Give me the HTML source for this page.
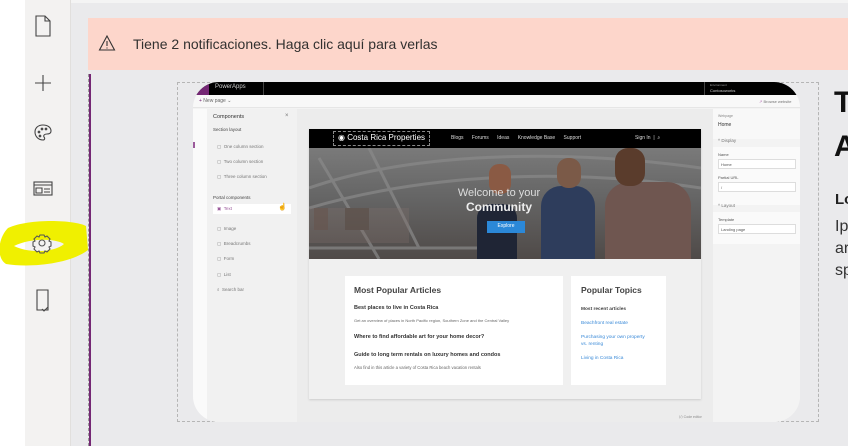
<!DOCTYPE html><html><head><meta charset="utf-8"><style>
*{margin:0;padding:0;box-sizing:border-box}
body{width:848px;height:446px;overflow:hidden;background:#fff;font-family:"Liberation Sans",sans-serif;position:relative}
.a{position:absolute}
.t{position:absolute;white-space:nowrap}
</style></head><body>
<div class="a" style="left:25px;top:0;width:46px;height:446px;background:#f3f2f1;border-right:1px solid #e1dfdd"></div>
<div class="a" style="left:71px;top:0;width:777px;height:446px;background:#eaeaec"></div>
<div class="a" style="left:71px;top:0;width:777px;height:3px;background:#f4f4f4"></div>
<svg class="a" style="left:30px;top:12px" width="26" height="230" viewBox="0 0 26 230" fill="none" stroke="#444" stroke-width="1.1">
<path d="M6 4h9l5 5v15H6z M15 4v5h5"/>
<path d="M13 63v16 M5 71h16"/>
<path d="M13 113c-5 0-8 3-8 7s3 8 8 8c2 0 2-2 1-3-1-2 1-3 3-3 3 0 4-1 4-3 0-4-4-6-8-6z"/>
<circle cx="9" cy="120" r=".8"/><circle cx="12" cy="117" r=".8"/><circle cx="16" cy="117" r=".8"/><circle cx="10" cy="124" r=".8"/>
<rect x="4" y="170" width="18" height="13"/><path d="M4 173h18 M6 176h6v5H6z M14 177h6 M14 180h6"/>
</svg>
<svg class="a" style="left:0;top:218px" width="90" height="58" viewBox="0 0 90 58"><path d="M8 10 C30 0 75 2 86 8 L88 32 C70 46 30 50 6 46 C-4 40 -2 20 8 10z M14 28 C30 20 55 20 64 26 C55 34 30 36 14 28z" fill="#f0f000" fill-rule="evenodd"/>
<g transform="translate(42,25)" fill="none" stroke="#555" stroke-width="1.1"><circle r="3"/><path d="M-2-8h4l1 2 2-1 3 3-1 2 2 1v4l-2 1 1 2-3 3-2-1-1 2h-4l-1-2-2 1-3-3 1-2-2-1v-4l2-1-1-2 3-3 2 1z"/></g></svg>
<svg class="a" style="left:33px;top:288px" width="20" height="26" viewBox="0 0 20 26" fill="none" stroke="#444" stroke-width="1.1"><path d="M4 2h11v20H4z M9 21l2 2 4-4"/></svg>
<div class="a" style="left:88px;top:18px;width:760px;height:52px;background:#fdd6cb"></div>
<svg class="a" style="left:98px;top:34px" width="18" height="18" viewBox="0 0 18 18" fill="none" stroke="#333" stroke-width="1.1"><path d="M9 2L1.5 16h15z M9 7v5 M9 13.5v1"/></svg>
<div class="t" style="left:133px;top:36px;font-size:14px;color:#323130">Tiene 2 notificaciones. Haga clic aquí para verlas</div>
<div class="a" style="left:88px;top:74px;width:1px;height:372px;border-left:1px dashed #999"></div>
<div class="a" style="left:89px;top:74px;width:2px;height:372px;background:#742774"></div>
<div class="a" style="left:177px;top:82px;width:642px;height:340px;border:1px dashed #b5b5b5"></div>
<div class="a" style="left:818px;top:82px;width:30px;height:340px;border-left:1px dashed #b5b5b5"></div>
<div class="a" style="left:193px;top:82px;width:607px;height:340px;border-radius:26px;overflow:hidden;background:#f3f3f3">
 <div class="a" style="left:0;top:0;width:607px;height:13px;background:#000"></div>
 <div class="a" style="left:0;top:0;width:16px;height:13px;background:#742774"></div>
 <div class="t" style="left:22px;top:2px;font-size:6px;color:#ccc">PowerApps</div>
 <div class="a" style="left:70px;top:0;width:1px;height:13px;background:#444"></div>
 <div class="a" style="left:511px;top:0;width:1px;height:13px;background:#444"></div>
 <div class="t" style="left:517px;top:1px;font-size:3px;color:#999">Environment</div>
 <div class="t" style="left:517px;top:6px;font-size:4px;color:#ccc">Contosoworks</div>
 <div class="a" style="left:0;top:13px;width:607px;height:13px;background:#f8f8f8;border-bottom:1px solid #e6e6e6"></div>
 <div class="t" style="left:6px;top:16px;font-size:5px;color:#666"><span style="color:#742774">+</span> New page ⌄</div>
 <div class="t" style="left:566px;top:17px;font-size:4px;color:#777"><span style="color:#b36bb3">↗</span> Browse website</div>
 <div class="a" style="left:0;top:27px;width:14px;height:313px;background:#fafafa"></div>
 <div class="a" style="left:0;top:60px;width:2px;height:6px;background:#9b5a9b"></div>
 <div class="a" style="left:14px;top:27px;width:90px;height:313px;background:#f1f1f1"></div>
 <div class="t" style="left:20px;top:32px;font-size:5.5px;color:#333">Components</div>
 <div class="t" style="left:92px;top:31px;font-size:6px;color:#777">×</div>
 <div class="t" style="left:20px;top:45px;font-size:4.5px;color:#444">Section layout</div>
 <div class="t" style="left:24px;top:57px;font-size:4.5px;color:#777;line-height:15px">▢ &nbsp;One column section<br>▢ &nbsp;Two column section<br>▢ &nbsp;Three column section</div>
 <div class="t" style="left:20px;top:113px;font-size:4.5px;color:#444">Portal components</div>
 <div class="a" style="left:20px;top:122px;width:78px;height:10px;background:#fff"></div>
 <div class="t" style="left:24px;top:124px;font-size:4.5px;color:#9b5a9b">▣ &nbsp;Text</div>
 <div class="t" style="left:85px;top:121px;font-size:7px;color:#333">☝</div>
 <div class="t" style="left:24px;top:139px;font-size:4.5px;color:#777;line-height:15.2px">▢ &nbsp;Image<br>▢ &nbsp;Breadcrumbs<br>▢ &nbsp;Form<br>▢ &nbsp;List<br>⌕ &nbsp;Search bar</div>
 <div class="a" style="left:104px;top:27px;width:416px;height:313px;background:#ececec"></div>
 <div class="a" style="left:116px;top:47px;width:392px;height:270px;background:#f0f0f0;box-shadow:0 1px 2px #ccc"></div>
 <div class="a" style="left:116px;top:47px;width:392px;height:19px;background:#000"></div>
 <div class="a" style="left:140px;top:49px;width:97px;height:15px;border:1px dashed #888"></div>
 <div class="t" style="left:145px;top:51px;font-size:8px;color:#fff">◉ Costa Rica Properties</div>
 <div class="t" style="left:258px;top:53px;font-size:5px;color:#ddd">Blogs &nbsp;&nbsp;&nbsp;&nbsp;&nbsp;Forums &nbsp;&nbsp;&nbsp;&nbsp;&nbsp;Ideas &nbsp;&nbsp;&nbsp;&nbsp;&nbsp;Knowledge Base &nbsp;&nbsp;&nbsp;&nbsp;&nbsp;Support</div>
 <div class="t" style="left:442px;top:53px;font-size:5px;color:#ddd">Sign In &nbsp;| &nbsp;⌕</div>
 <div class="a" style="left:116px;top:66px;width:392px;height:111px;background:linear-gradient(180deg,#7a7a7a 0%,#656565 45%,#4f4a48 100%)"></div>
 <svg class="a" style="left:116px;top:66px" width="392" height="111" viewBox="0 0 392 111" fill="none" stroke="#8a8a8a" stroke-width="3" opacity=".7">
  <path d="M0 40 C100 5 250 0 392 20"/><path d="M0 60 C120 25 260 20 392 40"/><path d="M10 10 L70 111"/><path d="M60 0 L110 100"/><path d="M0 100 H200"/>
  <rect x="5" y="60" width="14" height="22" fill="#5c4a42" stroke="none"/><rect x="36" y="60" width="24" height="22" fill="#4a4038" stroke="none"/><rect x="0" y="60" width="100" height="35" fill="#8a7670" stroke="none" opacity=".35"/>
 </svg>
 <div class="a" style="left:284px;top:122px;width:40px;height:55px;border-radius:14px 14px 0 0;background:#1f2535"></div>
 <div class="a" style="left:348px;top:104px;width:54px;height:73px;border-radius:20px 20px 0 0;background:#2e3d5c"></div>
 <div class="a" style="left:364px;top:76px;width:24px;height:30px;border-radius:11px;background:#7b5a48"></div>
 <div class="a" style="left:412px;top:100px;width:86px;height:77px;border-radius:24px 24px 0 0;background:#6f5650"></div>
 <div class="a" style="left:422px;top:66px;width:30px;height:38px;border-radius:13px;background:#5a3c2c"></div>
 <div class="a" style="left:296px;top:82px;width:22px;height:30px;border-radius:10px;background:#8a5a44"></div>
 <div class="t" style="left:226px;top:105px;width:160px;text-align:center;font-size:11px;color:#ddd">Welcome to your</div>
 <div class="t" style="left:226px;top:118px;width:160px;text-align:center;font-size:12px;font-weight:bold;color:#eee">Community</div>
 <div class="a" style="left:294px;top:139px;width:38px;height:12px;background:#2b88d8"></div>
 <div class="t" style="left:294px;top:141px;width:38px;text-align:center;font-size:5px;color:#fff">Explore</div>
 <div class="a" style="left:152px;top:194px;width:218px;height:109px;background:#fff"></div>
 <div class="t" style="left:161px;top:203px;font-size:8.5px;font-weight:bold;color:#444">Most Popular Articles</div>
 <div class="t" style="left:161px;top:223px;font-size:5.5px;font-weight:bold;color:#333">Best places to live in Costa Rica</div>
 <div class="t" style="left:161px;top:236px;font-size:4px;color:#666">Get an overview of places in North Pacific region, Southern Zone and the Central Valley</div>
 <div class="t" style="left:161px;top:252px;font-size:5.5px;font-weight:bold;color:#333">Where to find affordable art for your home decor?</div>
 <div class="t" style="left:161px;top:270px;font-size:5.5px;font-weight:bold;color:#333">Guide to long term rentals on luxury homes and condos</div>
 <div class="t" style="left:161px;top:283px;font-size:4.2px;color:#666">Also find in this article a variety of Costa Rica beach vacation rentals</div>
 <div class="a" style="left:378px;top:194px;width:95px;height:109px;background:#fff"></div>
 <div class="t" style="left:388px;top:203px;font-size:8.5px;font-weight:bold;color:#444">Popular Topics</div>
 <div class="t" style="left:388px;top:225px;font-size:4.8px;font-weight:bold;color:#444">Most recent articles</div>
 <div class="t" style="left:388px;top:238px;font-size:4.8px;color:#3a8ad8;line-height:7px">Beachfront real estate<br><br>Purchasing your own property<br>vs. renting<br><br>Living in Costa Rica</div>
 <div class="t" style="left:486px;top:333px;font-size:3.5px;color:#888">⟨/⟩ Code editor</div>
 <div class="a" style="left:520px;top:27px;width:87px;height:313px;background:#f3f3f3"></div>
 <div class="a" style="left:520px;top:27px;width:87px;height:30px;background:#f8f8f8"></div>
 <div class="t" style="left:525px;top:32px;font-size:3.5px;color:#888">Webpage</div>
 <div class="t" style="left:525px;top:40px;font-size:5px;color:#333">Home</div>
 <div class="t" style="left:525px;top:56px;font-size:4.5px;color:#777">^ Display</div>
 <div class="a" style="left:520px;top:65px;width:87px;height:58px;background:#fafafa"></div>
 <div class="t" style="left:525px;top:70px;font-size:4px;color:#555">Name</div>
 <div class="a" style="left:525px;top:77px;width:78px;height:10px;background:#fff;border:1px solid #ddd"></div>
 <div class="t" style="left:528px;top:80px;font-size:4px;color:#555">Home</div>
 <div class="t" style="left:525px;top:93px;font-size:4px;color:#555">Partial URL</div>
 <div class="a" style="left:525px;top:100px;width:78px;height:10px;background:#fff;border:1px solid #ddd"></div>
 <div class="t" style="left:528px;top:103px;font-size:4px;color:#555">/</div>
 <div class="t" style="left:525px;top:121px;font-size:4.5px;color:#777">^ Layout</div>
 <div class="a" style="left:520px;top:130px;width:87px;height:32px;background:#fafafa"></div>
 <div class="t" style="left:525px;top:135px;font-size:4px;color:#555">Template</div>
 <div class="a" style="left:525px;top:142px;width:78px;height:10px;background:#fff;border:1px solid #ddd"></div>
 <div class="t" style="left:528px;top:145px;font-size:4px;color:#555">Landing page</div>
</div>
<div class="t" style="left:834px;top:86px;font-size:30px;font-weight:bold;color:#111">T</div>
<div class="t" style="left:834px;top:130px;font-size:30px;font-weight:bold;color:#111">A</div>
<div class="t" style="left:835px;top:191px;font-size:15px;font-weight:bold;color:#222">Lo</div>
<div class="t" style="left:835px;top:216px;font-size:16px;color:#333;line-height:22px">Ip<br>ar<br>sp</div>
</body></html>
